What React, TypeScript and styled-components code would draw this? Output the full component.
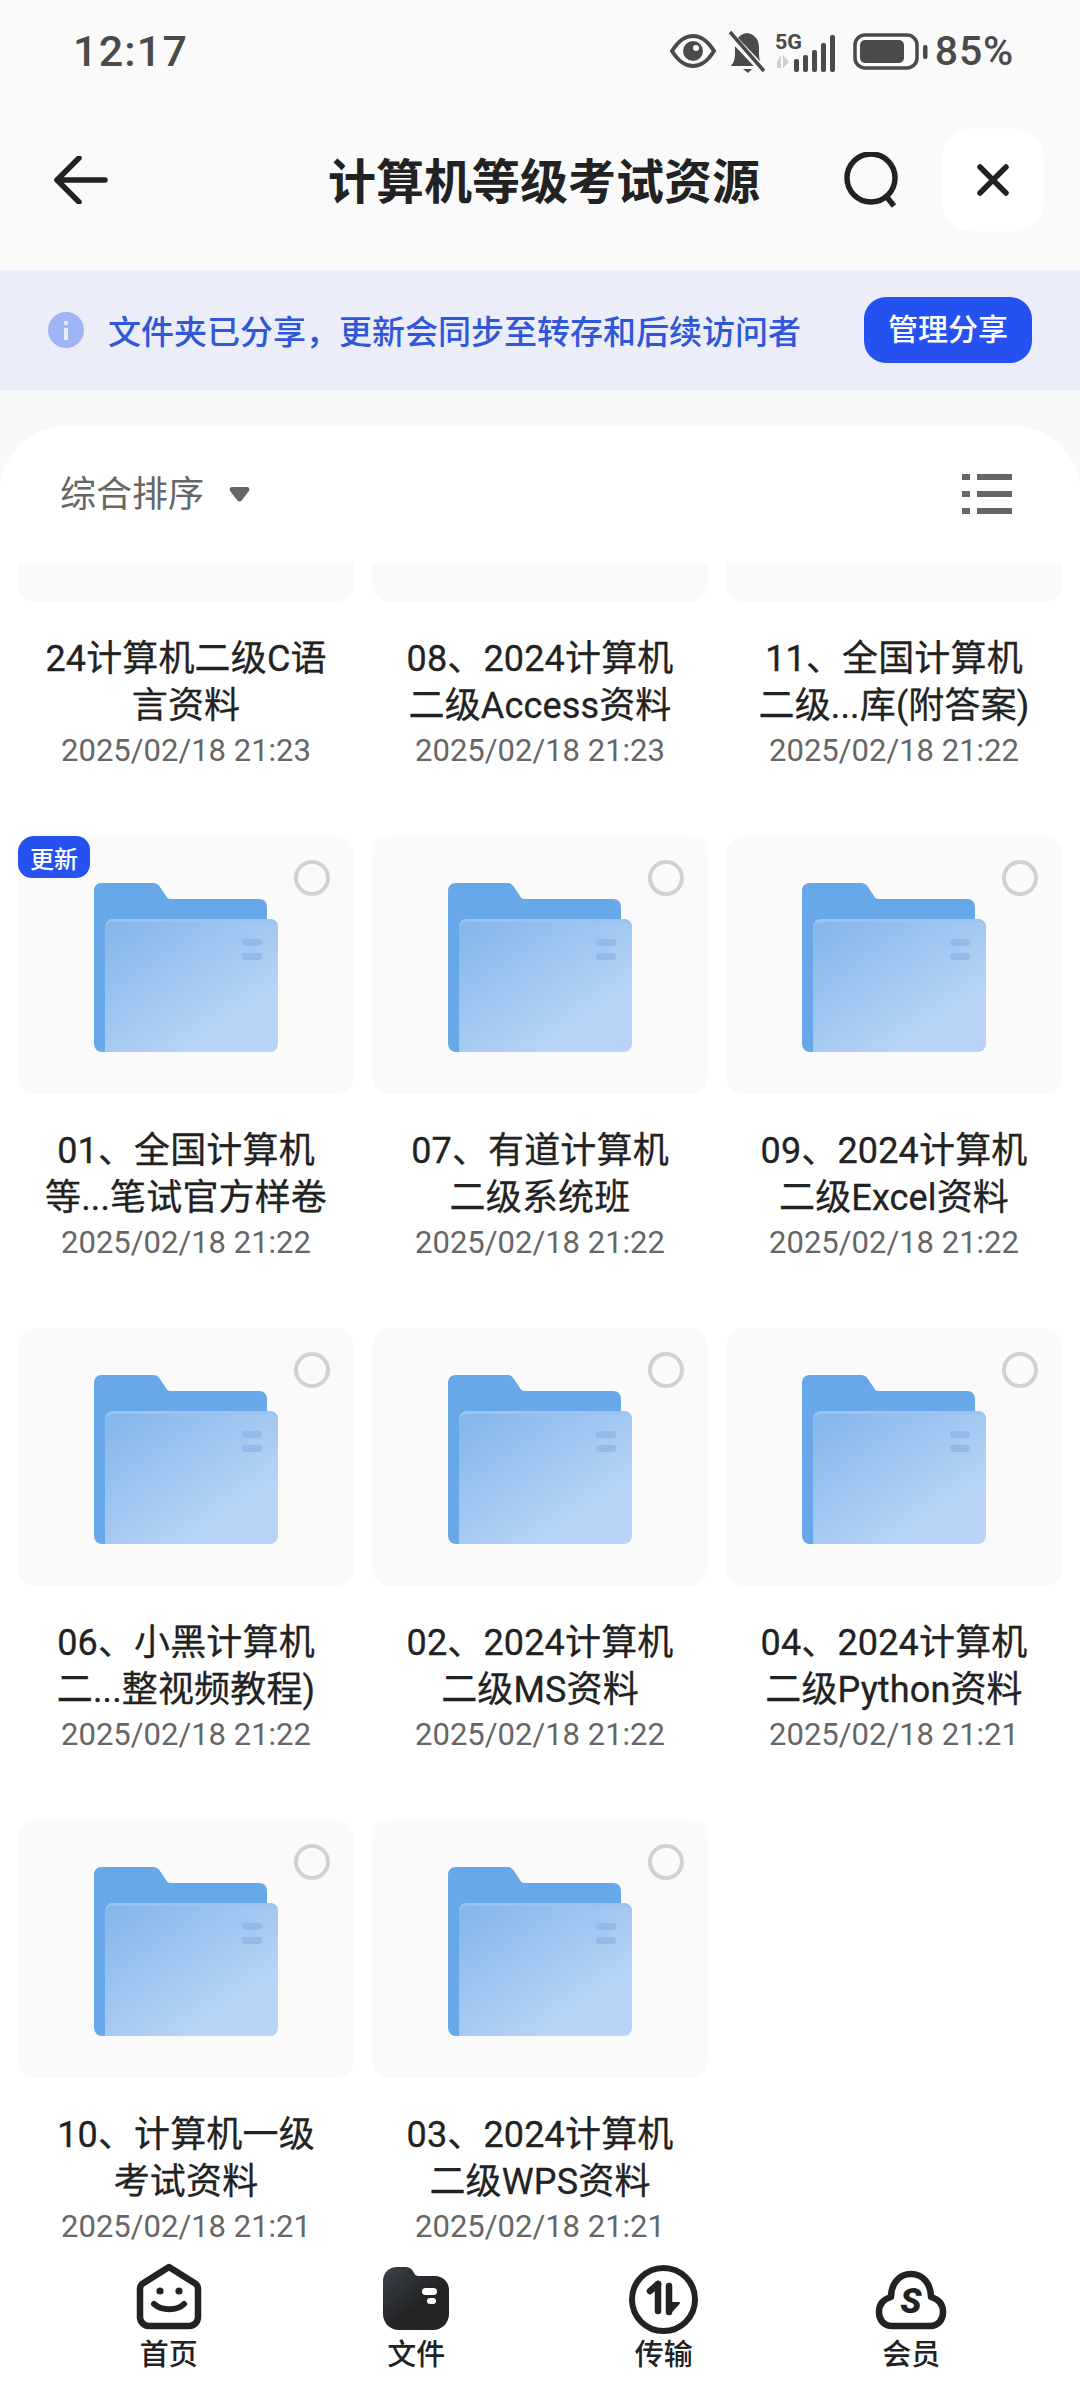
import React from 'react';
import styled, { createGlobalStyle } from 'styled-components';

const FONT = `Roboto, "Noto Sans CJK SC", "Noto Sans", sans-serif`;

const Global = createGlobalStyle`
  html, body { margin: 0; padding: 0; background: #f8f8f9; }
  * { box-sizing: border-box; }
  #root { width: 1080px; height: 2400px; overflow: hidden; }
`;

const Page = styled.div`
  width: 1080px;
  height: 2400px;
  display: flex;
  flex-direction: column;
  background: linear-gradient(#fafafa 0, #fafafa 260px, #f7f8fa 270px);
  font-family: ${FONT};
  color: #222;
  overflow: hidden;
`;

const StatusBar = styled.div`
  height: 100px;
  flex: none;
  display: flex;
  align-items: center;
  padding: 2px 66px 0 73px;
  color: #4a4a4a;
`;
const Time = styled.div`
  font-size: 43px;
  line-height: 50px;
  letter-spacing: 1.2px;
  font-weight: 500;
`;
const StatusIcons = styled.div`
  margin-left: auto;
  display: flex;
  align-items: center;
`;
const Percent = styled.div`
  font-size: 41px;
  line-height: 50px;
  margin-left: 5px;
  letter-spacing: 0.8px;
  font-weight: 500;
`;

const Header = styled.div`
  flex: none;
  height: 161px;
  display: flex;
  align-items: flex-start;
  padding: 29px 36px 0 54px;
`;
const IconSlot = styled.div`
  width: 54px;
  height: 102px;
  display: flex;
  align-items: center;
  justify-content: center;
  flex: none;
`;
const Title = styled.h1`
  margin: 3px 0 0 220px;
  font-size: 48px;
  line-height: 102px;
  font-weight: 700;
  color: #222;
  white-space: nowrap;
`;
const SearchSlot = styled(IconSlot)`
  margin-left: 83px;
  width: 56px;
`;
const CloseButton = styled.div`
  margin-left: 43px;
  width: 102px;
  height: 102px;
  border-radius: 28px;
  background: #fff;
  display: flex;
  align-items: center;
  justify-content: center;
`;

const Banner = styled.div`
  flex: none;
  margin-top: 9px;
  height: 120px;
  background: #ebeef9;
  display: flex;
  align-items: center;
  padding: 0 48px;
`;
const BannerText = styled.div`
  margin-left: 24px;
  font-size: 33px;
  line-height: 44px;
  font-weight: 500;
  color: #2f57d8;
  white-space: nowrap;
  padding-top: 5px;
`;
const ManageButton = styled.div`
  margin-left: auto;
  width: 168px;
  height: 66px;
  border-radius: 22px;
  background: #2451f0;
  color: #fff;
  font-size: 30px;
  font-weight: 500;
  display: flex;
  align-items: center;
  justify-content: center;
  padding-bottom: 6px;
`;

const Sheet = styled.div`
  flex: 1;
  min-height: 0;
  margin-top: 36px;
  background: #fff;
  border-radius: 66px 66px 0 0;
  display: flex;
  flex-direction: column;
  overflow: hidden;
`;
const SortBar = styled.div`
  flex: none;
  height: 137px;
  display: flex;
  align-items: flex-start;
  padding: 43px 68px 0 60px;
  color: #666;
`;
const SortLabel = styled.div`
  font-size: 36px;
  line-height: 52px;
  font-weight: 400;
  color: #666;
`;
const Caret = styled.svg`
  margin: 18px 0 0 25px;
  flex: none;
`;
const ListToggle = styled.svg`
  margin: 5px 0 0 auto;
  flex: none;
`;

const ScrollArea = styled.div`
  flex: 1;
  min-height: 0;
  overflow: hidden;
`;
const Grid = styled.div`
  margin-top: -219px;
  padding: 0 18px;
  display: grid;
  grid-template-columns: repeat(3, 336px);
  column-gap: 18px;
  row-gap: 63px;
`;
const Item = styled.div`
  display: flex;
  flex-direction: column;
  align-items: center;
`;
const Card = styled.div`
  position: relative;
  width: 336px;
  height: 258px;
  border-radius: 18px;
  background: #fafafb;
  display: flex;
  justify-content: center;
  padding: 47px 0 0 0;
`;
const Badge = styled.div`
  position: absolute;
  left: 0;
  top: 0;
  width: 72px;
  height: 42px;
  border-radius: 16px 14px 14px 14px;
  background: #2451f0;
  color: #fff;
  font-size: 24px;
  font-weight: 500;
  display: flex;
  align-items: center;
  justify-content: center;
`;
const Radio = styled.div`
  position: absolute;
  right: 24px;
  top: 24px;
  width: 36px;
  height: 36px;
  border-radius: 50%;
  border: 4px solid #d0d1d5;
`;
const Name = styled.div`
  margin-top: 34px;
  width: 320px;
  height: 93px;
  font-size: 36px;
  line-height: 47px;
  font-weight: 400;
  letter-spacing: 0.15px;
  color: #222;
  text-align: center;
  -webkit-text-stroke: 0.3px #222;
`;
const DateText = styled.div`
  font-size: 31px;
  line-height: 44px;
  color: #666;
  white-space: nowrap;
`;

const Nav = styled.div`
  flex: none;
  height: 150px;
  background: #fff;
  padding: 0 45px;
  display: grid;
  grid-template-columns: repeat(4, 1fr);
`;
const NavItem = styled.div`
  display: flex;
  flex-direction: column;
  align-items: center;
  padding-top: 13px;
`;
const NavIcon = styled.div<{ $drop?: number }>`
  height: 67px;
  display: flex;
  align-items: flex-end;
  justify-content: center;
  & > svg { margin-bottom: ${(p) => -(p.$drop ?? 0)}px; }
`;
const NavLabel = styled.div`
  margin-top: 5px;
  font-size: 29px;
  line-height: 40px;
  font-weight: 500;
  color: #222;
`;

const FolderIcon: React.FC<{ id: string }> = ({ id }) => (
  <svg width="184" height="169" viewBox="0 0 184 169">
    <defs>
      <linearGradient id={`front-${id}`} x1="0.1" y1="0.05" x2="0.85" y2="0.9">
        <stop offset="0" stopColor="#86b8ea" />
        <stop offset="0.85" stopColor="#b7d4f6" />
        <stop offset="1" stopColor="#b7d4f6" />
      </linearGradient>
    </defs>
    <path
      d="M8 0H59C62 0 64 1 66 4L72 13C73 15 74 16 77 16H165C170 16 173 19 173 24V160C173 165 170 169 165 169H8C3 169 0 165 0 160V8C0 3 3 0 8 0Z"
      fill="#69a8e8"
    />
    <path
      d="M19 36H176C181 36 184 40 184 44V160C184 165 181 169 176 169H11V44C11 40 14 36 19 36Z"
      fill={`url(#front-${id})`}
    />
    <path d="M19 36H176C181 36 184 40 184 44V46C184 42 181 39 176 39H19C14 39 11 42 11 46V44C11 40 14 36 19 36Z" fill="#9cc3ee" />
    <rect x="148" y="56" width="20" height="7" rx="3" fill="#91bbeb" />
    <rect x="148" y="70" width="20" height="7" rx="3" fill="#91bbeb" />
  </svg>
);

const rows: { name: React.ReactNode; date: string; badge?: boolean }[] = [
  { name: <>24计算机二级C语<br />言资料</>, date: '2025/02/18 21:23' },
  { name: <>08、2024计算机<br />二级Access资料</>, date: '2025/02/18 21:23' },
  { name: <>11、全国计算机<br />二级...库(附答案)</>, date: '2025/02/18 21:22' },
  { name: <>01、全国计算机<br />等...笔试官方样卷</>, date: '2025/02/18 21:22', badge: true },
  { name: <>07、有道计算机<br />二级系统班</>, date: '2025/02/18 21:22' },
  { name: <>09、2024计算机<br />二级Excel资料</>, date: '2025/02/18 21:22' },
  { name: <>06、小黑计算机<br />二...整视频教程)</>, date: '2025/02/18 21:22' },
  { name: <>02、2024计算机<br />二级MS资料</>, date: '2025/02/18 21:22' },
  { name: <>04、2024计算机<br />二级Python资料</>, date: '2025/02/18 21:21' },
  { name: <>10、计算机一级<br />考试资料</>, date: '2025/02/18 21:21' },
  { name: <>03、2024计算机<br />二级WPS资料</>, date: '2025/02/18 21:21' },
];

const Glyphs = () => (
  <svg width="260" height="44" viewBox="0 0 260 44">
    <path d="M2 22C9 11 15 7 23 7S37 11 44 22C37 33 31 37 23 37S9 33 2 22Z" fill="none" stroke="#4a4a4a" strokeWidth="4" />
    <circle cx="23" cy="22" r="10" fill="#4a4a4a" />
    <circle cx="26" cy="19" r="3" fill="#fafafa" />
    <path d="M61 37C64 33 65 30 65 24V18C65 10 70 5 77 4C84 5 89 10 89 18V24C89 30 90 33 93 37Z" fill="#4a4a4a" />
    <path d="M73 40H82L78 44Z" fill="#4a4a4a" />
    <path d="M58 4L95 43" stroke="#fafafa" strokeWidth="8" />
    <path d="M60 3L94 42" stroke="#4a4a4a" strokeWidth="3.5" />
    <text x="105" y="20" fontFamily="Roboto, sans-serif" fontSize="20" fontWeight="700" fill="#4a4a4a" textLength="27" lengthAdjust="spacingAndGlyphs">5G</text>
    <path d="M111 26V39H107V33ZM113 26L119 33L113 39Z" fill="#cfcfcf" />
    <rect x="124" y="30" width="5" height="13" rx="2" fill="#4a4a4a" />
    <rect x="133" y="26" width="5" height="17" rx="2" fill="#4a4a4a" />
    <rect x="142" y="21" width="5" height="22" rx="2" fill="#4a4a4a" />
    <rect x="151" y="14" width="5" height="29" rx="2" fill="#4a4a4a" />
    <rect x="160" y="6" width="5" height="37" rx="2" fill="#4a4a4a" />
    <rect x="185" y="6" width="62" height="33" rx="10" fill="none" stroke="#4a4a4a" strokeWidth="3.5" />
    <rect x="190" y="11" width="44" height="23" rx="5" fill="#4a4a4a" />
    <rect x="253" y="16" width="4.5" height="14" rx="2" fill="#4a4a4a" />
  </svg>
);

export default function App() {
  return (
    <Page>
      <Global />
      <StatusBar>
        <Time>12:17</Time>
        <StatusIcons>
          <Glyphs />
          <Percent>85%</Percent>
        </StatusIcons>
      </StatusBar>
      <Header>
        <IconSlot>
          <svg width="54" height="48" viewBox="0 0 54 48">
            <path d="M25 2L3 24L25 46M3 24H51" fill="none" stroke="#222" strokeWidth="5.5" strokeLinecap="round" strokeLinejoin="round" />
          </svg>
        </IconSlot>
        <Title>计算机等级考试资源</Title>
        <SearchSlot>
          <svg width="56" height="56" viewBox="0 0 56 56">
            <circle cx="28" cy="26" r="24" fill="none" stroke="#222" strokeWidth="5.5" />
            <path d="M43 44L51 54" stroke="#222" strokeWidth="5.5" />
          </svg>
        </SearchSlot>
        <CloseButton>
          <svg width="32" height="32" viewBox="0 0 32 32">
            <path d="M3 3L29 29M29 3L3 29" stroke="#222" strokeWidth="5.5" strokeLinecap="round" />
          </svg>
        </CloseButton>
      </Header>
      <Banner>
        <svg width="36" height="36" viewBox="0 0 36 36">
          <circle cx="18" cy="18" r="18" fill="#a0b5f5" />
          <rect x="16" y="16" width="4" height="12" rx="1" fill="#ebeef9" />
          <rect x="16" y="9" width="4" height="4" rx="1" fill="#ebeef9" />
        </svg>
        <BannerText>文件夹已分享，更新会同步至转存和后续访问者</BannerText>
        <ManageButton>管理分享</ManageButton>
      </Banner>
      <Sheet>
        <SortBar>
          <SortLabel>综合排序</SortLabel>
          <Caret width="21" height="15" viewBox="0 0 21 15">
            <path d="M3 0H18C20 0 21 2 20 4L13 13C11.5 15 9.5 15 8 13L1 4C0 2 1 0 3 0Z" fill="#666" />
          </Caret>
          <ListToggle width="50" height="40" viewBox="0 0 50 40">
            <g fill="#666">
              <rect x="0" y="0" width="8" height="6" />
              <rect x="15" y="0" width="35" height="6" />
              <rect x="0" y="17" width="8" height="6" />
              <rect x="15" y="17" width="35" height="6" />
              <rect x="0" y="34" width="8" height="6" />
              <rect x="15" y="34" width="35" height="6" />
            </g>
          </ListToggle>
        </SortBar>
        <ScrollArea>
          <Grid>
            {rows.map((r, i) => (
              <Item key={i}>
                <Card>
                  {r.badge && <Badge>更新</Badge>}
                  <FolderIcon id={String(i)} />
                  <Radio />
                </Card>
                <Name>{r.name}</Name>
                <DateText>{r.date}</DateText>
              </Item>
            ))}
          </Grid>
        </ScrollArea>
        <Nav>
          <NavItem>
            <NavIcon>
              <svg width="66" height="67" viewBox="0 0 66 67">
                <path d="M33 4L60 21C61 22 62 24 62 26V54C62 59 58 63 53 63H13C8 63 4 59 4 54V26C4 24 5 22 6 21Z" fill="none" stroke="#222" strokeWidth="6.5" strokeLinejoin="round" />
                <circle cx="24" cy="28" r="3.6" fill="#222" />
                <circle cx="43" cy="28" r="3.6" fill="#222" />
                <path d="M18 41C26 48 41 48 48 41" fill="none" stroke="#222" strokeWidth="6" strokeLinecap="round" />
              </svg>
            </NavIcon>
            <NavLabel>首页</NavLabel>
          </NavItem>
          <NavItem>
            <NavIcon>
              <svg width="66" height="63" viewBox="0 0 66 63">
                <defs>
                  <linearGradient id="navFile" x1="0" y1="0" x2="0.55" y2="0.6">
                    <stop offset="0" stopColor="#3a414c" />
                    <stop offset="1" stopColor="#232323" />
                  </linearGradient>
                </defs>
                <path d="M14 0H22C27 0 29 2 31 6C32 8 33 9 36 9H52C60 9 66 15 66 23V47C66 56 59 63 50 63H16C7 63 0 56 0 47V14C0 6 6 0 14 0Z" fill="url(#navFile)" />
                <rect x="39" y="21" width="15" height="7" rx="3.5" fill="#fff" />
                <rect x="44" y="31" width="9" height="6" rx="3" fill="#fff" />
              </svg>
            </NavIcon>
            <NavLabel>文件</NavLabel>
          </NavItem>
          <NavItem>
            <NavIcon $drop={4}>
              <svg width="69" height="69" viewBox="0 0 69 69">
                <circle cx="34.5" cy="34.5" r="31.5" fill="none" stroke="#222" strokeWidth="6" />
                <path d="M29 19V46" stroke="#222" strokeWidth="6.5" strokeLinecap="round" />
                <path d="M29 19L21 26" stroke="#222" strokeWidth="6.5" strokeLinecap="round" />
                <path d="M40 21V47" stroke="#222" strokeWidth="6.5" strokeLinecap="round" />
                <path d="M40 38H50L40 49Z" fill="#222" stroke="#222" strokeWidth="2" strokeLinejoin="round" />
              </svg>
            </NavIcon>
            <NavLabel>传输</NavLabel>
          </NavItem>
          <NavItem>
            <NavIcon>
              <svg width="72" height="60" viewBox="0 0 72 60">
                <path d="M17 56C9 56 4 50 4 42C4 34 9 29 16 27C16 14 24 4 36 4C48 4 56 14 56 27C63 29 68 34 68 42C68 50 63 56 55 56Z" fill="none" stroke="#222" strokeWidth="6.5" strokeLinejoin="round" />
                <text x="36" y="43" textAnchor="middle" fontFamily="Roboto, sans-serif" fontStyle="italic" fontWeight="900" fontSize="35" fill="#222">S</text>
              </svg>
            </NavIcon>
            <NavLabel>会员</NavLabel>
          </NavItem>
        </Nav>
      </Sheet>
    </Page>
  );
}
